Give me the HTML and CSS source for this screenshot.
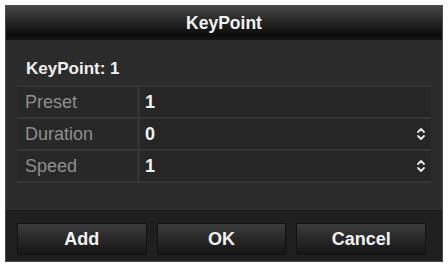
FILE: index.html
```html
<!DOCTYPE html>
<html>
<head>
<meta charset="utf-8">
<link rel="stylesheet" href="styles.css">
</head>
<body>
<div class="dialog">
  <div class="title">KeyPoint</div>
  <div class="content">
    <div class="heading">KeyPoint: 1</div>
    <div class="table">
      <div class="row">
        <div class="label">Preset</div>
        <div class="value"><span>1</span></div>
      </div>
      <div class="row">
        <div class="label">Duration</div>
        <div class="value"><span>0</span>
          <svg class="spin" width="10" height="16" viewBox="0 0 10 16"><path d="M2 6 L5 3 L8 6 M2 10 L5 13 L8 10" fill="none" stroke="#e8e8e8" stroke-width="1.8" stroke-linecap="round" stroke-linejoin="round"/></svg>
        </div>
      </div>
      <div class="row">
        <div class="label">Speed</div>
        <div class="value"><span>1</span>
          <svg class="spin" width="10" height="16" viewBox="0 0 10 16"><path d="M2 6 L5 3 L8 6 M2 10 L5 13 L8 10" fill="none" stroke="#e8e8e8" stroke-width="1.8" stroke-linecap="round" stroke-linejoin="round"/></svg>
        </div>
      </div>
    </div>
  </div>
  <div class="footer">
    <div class="btn">Add</div>
    <div class="btn">OK</div>
    <div class="btn">Cancel</div>
  </div>
</div>
</body>
</html>
```
FILE: styles.css
```css
html, body {
  margin: 0;
  padding: 0;
  background: #ffffff;
}
body {
  width: 448px;
  height: 267px;
  overflow: hidden;
  font-family: "Liberation Sans", Arial, sans-serif;
}
.dialog {
  margin: 5px 0 0 5px;
  width: 438px;
  height: 257px;
  box-sizing: border-box;
  border: 1px solid #4a4a4a;
  background: #2b2b2b;
  display: flex;
  flex-direction: column;
}
.title {
  height: 34px;
  flex: none;
  background: linear-gradient(#474747 0%, #2a2a2a 40%, #0c0c0c 85%, #151515 100%);
  color: #f2f2f2;
  font-weight: bold;
  font-size: 17.5px;
  display: flex;
  align-items: center;
  justify-content: center;
}
.content {
  flex: 1;
  padding: 0 11px 0 11px;
  display: flex;
  flex-direction: column;
}
.heading {
  height: 45px;
  display: flex;
  align-items: center;
  padding: 12px 0 0 9px;
  box-sizing: border-box;
  color: #f0f0f0;
  font-weight: bold;
  font-size: 17px;
}
.table {
  display: flex;
  flex-direction: column;
  border-top: 2px solid #333333;
}
.row {
  display: flex;
  height: 32px;
  border-bottom: 2px solid #353535;
  box-sizing: border-box;
}
.label {
  width: 123px;
  flex: none;
  background: #282828;
  border-right: 3px solid #333333;
  color: #8e8e8e;
  font-size: 18px;
  display: flex;
  align-items: center;
  padding-left: 8px;
  box-sizing: border-box;
}
.value {
  flex: 1;
  background: #262626;
  color: #f2f2f2;
  font-weight: bold;
  font-size: 18px;
  display: flex;
  align-items: center;
  justify-content: space-between;
  padding: 0 5px 0 5px;
  margin-right: 0;
}
.footer {
  flex: none;
  height: 51px;
  box-sizing: border-box;
  border-top: 1px solid #1a1a1a;
  background: #1f1f1f;
  display: flex;
  gap: 10px;
  padding: 12px 16px 6px 11px;
}
.btn {
  flex: 1;
  background: linear-gradient(#3c3c3c 0%, #2a2a2a 45%, #161616 100%);
  border: 1px solid #111;
  border-radius: 2px;
  color: #f2f2f2;
  font-weight: bold;
  font-size: 18px;
  display: flex;
  align-items: center;
  justify-content: center;
}
```
